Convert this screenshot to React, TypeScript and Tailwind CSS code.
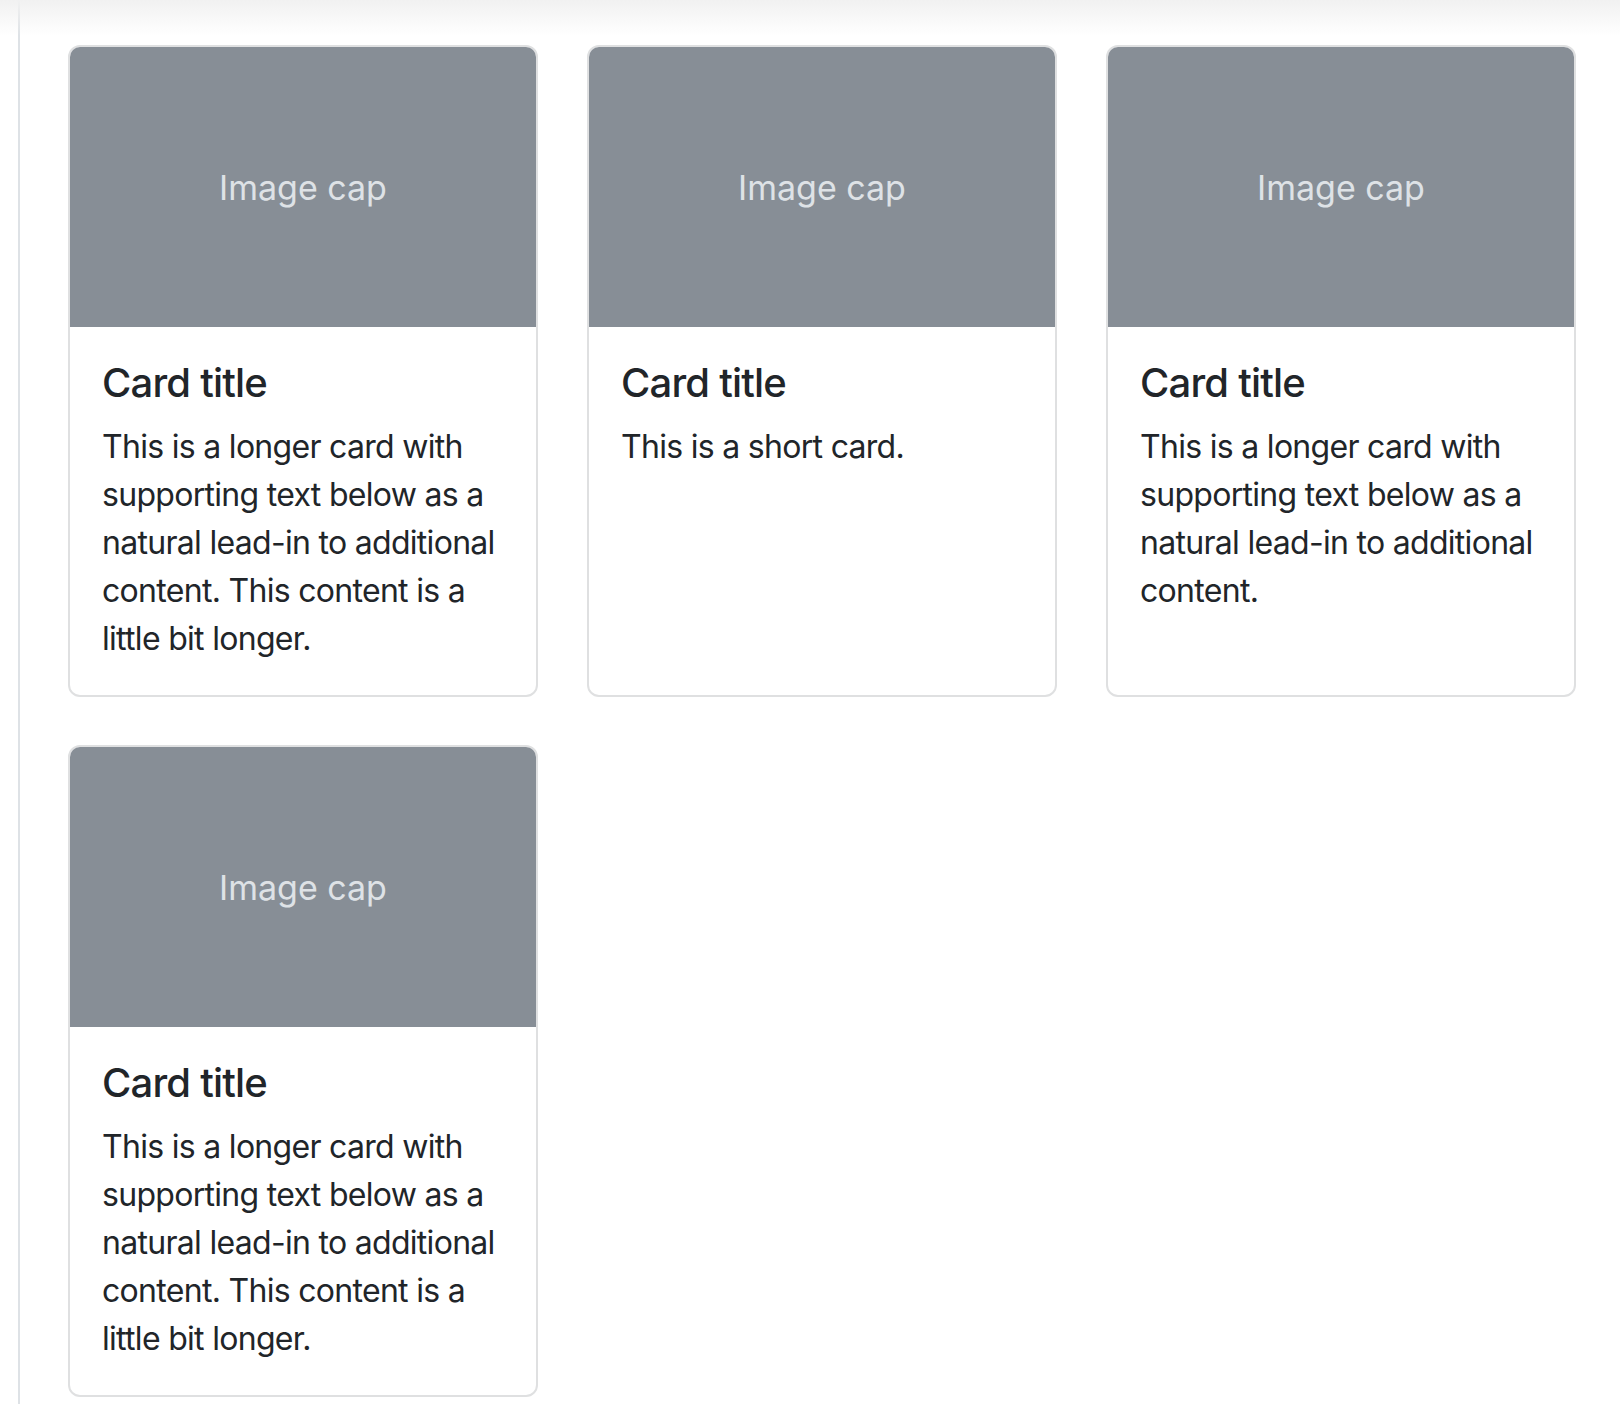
import React from "react";

interface CardItem {
  id: number;
  title: string;
  text: string;
}

const cards: CardItem[] = [
  {
    id: 1,
    title: "Card title",
    text: "This is a longer card with supporting text below as a natural lead-in to additional content. This content is a little bit longer.",
  },
  { id: 2, title: "Card title", text: "This is a short card." },
  {
    id: 3,
    title: "Card title",
    text: "This is a longer card with supporting text below as a natural lead-in to additional content.",
  },
  {
    id: 4,
    title: "Card title",
    text: "This is a longer card with supporting text below as a natural lead-in to additional content. This content is a little bit longer.",
  },
];

function Card({ title, text }: CardItem) {
  return (
    <div className="flex flex-col bg-white border-2 border-[#dfe0e1] rounded-[12px] overflow-hidden">
      <div className="h-[280px] bg-[#878e96] flex items-center justify-center">
        <span className="text-[34px] text-[#dee2e6]">Image cap</span>
      </div>
      <div className="p-8 text-[#212529]">
        <h5 className="text-[40px] leading-[48px] font-medium tracking-[-0.8px] mb-4">{title}</h5>
        <p className="text-[32px] leading-[48px] tracking-[-0.7px]">{text}</p>
      </div>
    </div>
  );
}

export default function App() {
  return (
    <div
      className="relative min-h-[1404px] bg-white flex"
      style={{ fontFamily: "Inter, 'Noto Sans', sans-serif" }}
    >
      {/* navbar shadow fading into the page */}
      <div className="absolute inset-x-0 top-0 h-[36px] bg-gradient-to-b from-[#f1f1f1] to-white/0 pointer-events-none" />
      <div className="ml-[18px] w-[2px] bg-[#dee2e6]" />
      <div className="pl-[48px] pt-[45px]">
        <div className="grid grid-cols-[repeat(3,470px)] gap-x-[49px] gap-y-[48px]">
          {cards.map((c) => (
            <Card key={c.id} {...c} />
          ))}
        </div>
      </div>
    </div>
  );
}
